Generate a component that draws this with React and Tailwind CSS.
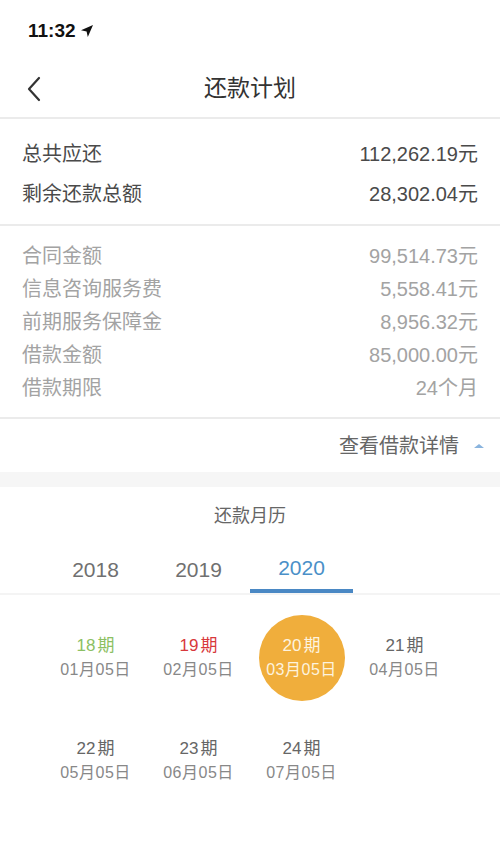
import React from "react";

const FONT = { fontFamily: '"Liberation Sans", "Noto Sans CJK SC", sans-serif' };

function Row({ label, value, cls }) {
  return (
    <div className={`flex items-center justify-between ${cls}`}>
      <span>{label}</span>
      <span>{value}</span>
    </div>
  );
}

function Cell({ n, d, tone }) {
  if (tone === "active") {
    return (
      <div className="flex h-[103px] items-center justify-center">
        <div className="flex h-[86px] w-[86px] flex-col items-center justify-center rounded-full bg-[#f0ae3c] text-[#fdf3df]">
          <span className="text-[17px] leading-[24px]">{n}<span className="ml-[2px]">期</span></span>
          <span className="text-[16px] leading-[24px] tracking-[0.5px]">{d}</span>
        </div>
      </div>
    );
  }
  const c = tone === "green" ? "text-[#8cc063]" : tone === "red" ? "text-[#d8393c]" : "text-[#666]";
  return (
    <div className="flex h-[103px] flex-col items-center justify-center">
      <span className={`text-[17px] leading-[24px] ${c}`}>{n}<span className="ml-[2px]">期</span></span>
      <span className="text-[16px] leading-[24px] tracking-[0.5px] text-[#888]">{d}</span>
    </div>
  );
}

export default function App() {
  return (
    <div className="min-h-[866px] w-[500px] bg-white" style={FONT}>
      {/* status bar */}
      <div className="flex h-[60px] items-center pl-[28px] pt-[2px]">
        <span className="text-[19px] font-bold text-[#111]">11:32</span>
        <svg width="14" height="14" viewBox="0 0 14 14" className="ml-[4px]">
          <path d="M13 1 L1 6.2 L6.6 7.4 L7.8 13 Z" fill="#111" />
        </svg>
      </div>
      {/* nav */}
      <div className="relative flex h-[57px] items-center justify-center">
        <svg width="16" height="26" viewBox="0 0 16 26" className="absolute left-[26px] top-[16px]">
          <path d="M13 2 L3 13 L13 24" fill="none" stroke="#333" strokeWidth="2.2" strokeLinecap="round" strokeLinejoin="round" />
        </svg>
        <span className="text-[23px] text-[#333]">还款计划</span>
      </div>
      <div className="h-[2px] bg-[#ebebeb]" />

      {/* totals */}
      <div className="px-[22px] pb-[10px] pt-[15px] text-[20px] text-[#4a4a4a]">
        <Row label="总共应还" value="112,262.19元" cls="h-[40px]" />
        <Row label="剩余还款总额" value="28,302.04元" cls="h-[40px]" />
      </div>
      <div className="h-[2px] bg-[#ebebeb]" />

      {/* details */}
      <div className="px-[22px] py-[13px] text-[20px] text-[#a3a3a3]">
        <Row label="合同金额" value="99,514.73元" cls="h-[33px]" />
        <Row label="信息咨询服务费" value="5,558.41元" cls="h-[33px]" />
        <Row label="前期服务保障金" value="8,956.32元" cls="h-[33px]" />
        <Row label="借款金额" value="85,000.00元" cls="h-[33px]" />
        <Row label="借款期限" value="24个月" cls="h-[33px]" />
      </div>
      <div className="h-[2px] bg-[#ebebeb]" />

      <div className="flex h-[53px] items-center justify-end pr-[13px]">
        <span className="text-[20px] text-[#666]">查看借款详情</span>
        <svg width="16" height="10" viewBox="0 0 16 10" className="ml-[12px]">
          <path d="M8 3 L13 7 L3 7 Z" fill="#8ab4de" />
        </svg>
      </div>
      <div className="h-[15px] bg-[#f6f6f6]" />

      {/* calendar */}
      <div className="flex h-[58px] items-center justify-center">
        <span className="text-[18px] text-[#666]">还款月历</span>
      </div>
      <div className="relative">
        <div className="grid grid-cols-4 px-[44px]">
          <div className="flex h-[48px] items-center justify-center pt-[2px] text-[21px] text-[#707070]">2018</div>
          <div className="flex h-[48px] items-center justify-center pt-[2px] text-[21px] text-[#707070]">2019</div>
          <div className="flex h-[48px] flex-col items-center justify-end">
            <span className="flex flex-1 items-center pt-[2px] text-[21px] text-[#4a90c8]">2020</span>
            <div className="h-[4px] w-full bg-[#4a88c4]" />
          </div>
        </div>
        <div className="h-[2px] bg-[#f4f4f4]" />
      </div>
      <div className="grid grid-cols-4 px-[44px] pt-[11px]">
        <Cell n="18" d="01月05日" tone="green" />
        <Cell n="19" d="02月05日" tone="red" />
        <Cell n="20" d="03月05日" tone="active" />
        <Cell n="21" d="04月05日" />
        <Cell n="22" d="05月05日" />
        <Cell n="23" d="06月05日" />
        <Cell n="24" d="07月05日" />
      </div>
    </div>
  );
}
